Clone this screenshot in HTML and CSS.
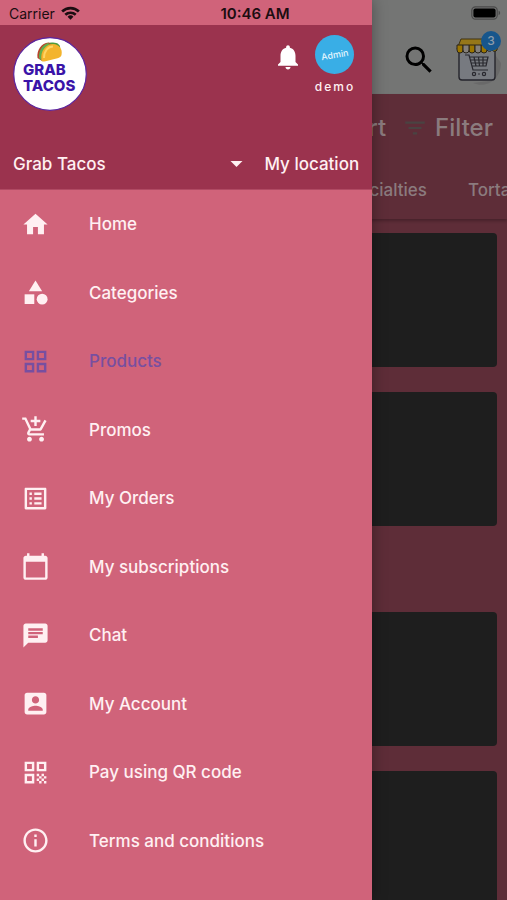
FILE: index.html
```html
<!DOCTYPE html>
<html lang="en">
<head>
<meta charset="utf-8">
<meta name="viewport" content="width=device-width, initial-scale=1">
<title>Grab Tacos</title>
<link rel="stylesheet" href="styles.css">
</head>
<body>
<div class="app">
  <div class="status">
    <span class="carrier">Carrier
      <svg class="wifi" viewBox="0 0 20 14" aria-hidden="true"><g fill="none" stroke="currentColor" stroke-width="2.8"><path d="M1.2 5.4a12.6 12.6 0 0 1 17.6 0"/><path d="M4.5 8.9a8 8 0 0 1 11 0"/></g><path fill="currentColor" d="M10 14 6.9 10.9a4.5 4.5 0 0 1 6.2 0z"/></svg>
    </span>
    <span class="time">10:46 AM</span>
    <svg class="battery" viewBox="0 0 30 14" aria-hidden="true"><rect x=".8" y=".8" width="25.4" height="12.4" rx="3.6" fill="none" stroke="#4a4a4a" stroke-width="1.2"/><rect x="2.4" y="2.4" width="22.2" height="9.2" rx="2" fill="#000"/><path d="M27.6 4.8v4.4c2-.6 2-3.8 0-4.4z" fill="#4a4a4a"/></svg>
  </div>

  <main class="page">
    <header class="appbar">
      <button class="icon-btn" aria-label="Search">
        <svg class="search" viewBox="0 0 24 24"><path fill="currentColor" d="M15.5 14h-.79l-.28-.27A6.47 6.47 0 0 0 16 9.5 6.5 6.5 0 1 0 9.5 16c1.61 0 3.09-.59 4.23-1.57l.27.28v.79l5 4.99L20.49 19l-4.99-5zm-6 0C7.01 14 5 11.99 5 9.5S7.01 5 9.5 5 14 7.01 14 9.5 11.99 14 9.5 14z"/></svg>
      </button>
      <button class="icon-btn cart" aria-label="Cart">
        <svg class="shop" viewBox="0 0 50 54">
          <path d="M20 50c14 6 28-4 28-20l-6-8v25z" fill="#696969"/>
          <path d="M6 16h36v28a3 3 0 0 1-3 3H9a3 3 0 0 1-3-3z" fill="#777a80" stroke="#25252c" stroke-width="1.4"/>
          <path d="M8 6h32l4 10H4z" fill="#967719" stroke="#3e3213" stroke-width="1"/>
          <path d="M4 12h6v5a3 3 0 0 1-6 0zM16 12h6v5a3 3 0 0 1-6 0zM28 12h6v5a3 3 0 0 1-6 0zM39 12h5v5a3 3 0 0 1-5 0z" fill="#9c7600" stroke="#2a251a"/>
          <path d="M10 12h6v5a3 3 0 0 1-6 0zM22 12h6v5a3 3 0 0 1-6 0zM34 12h5v5a3 3 0 0 1-5 0z" fill="#85817c" stroke="#2a251a"/>
          <g fill="none" stroke="#28282e" stroke-width="1.2"><path d="M12 22h4l4 15h15M16.500 24H35l-2 9H19M17.500 27h17M18.500 30h15M21 24l2 9M25.500 24l1 9M30 24v9"/><circle cx="21" cy="41" r="1.600"/><circle cx="31" cy="41" r="1.600"/></g><circle cx="26" cy="41" r=".8" fill="#28282e"/>
        </svg>
        <span class="badge">3</span>
      </button>
    </header>

    <section class="tools">
      <div class="actions">
        <button class="text-btn">Sort</button>
        <button class="text-btn">
          <svg class="filter" viewBox="0 0 24 24" aria-hidden="true"><path fill="currentColor" d="M10 18h4v-2h-4v2zM3 6v2h18V6H3zm3 7h12v-2H6v2z"/></svg>
          Filter
        </button>
      </div>
      <nav class="tabs" aria-label="Product categories">
        <a href="#specialties">Specialties</a>
        <a href="#tortas">Tortas</a>
      </nav>
    </section>

    <div class="list">
      <section class="group"><article class="card"></article><article class="card"></article></section>
      <section class="group"><article class="card"></article><article class="card"></article></section>
    </div>
  </main>

  <aside class="drawer">
    <header class="drawer-head">
      <div class="profile">
        <svg class="logo" viewBox="0 0 74 74" role="img" aria-label="Grab Tacos">
          <circle cx="37" cy="37" r="36.300" fill="#fff" stroke="#5b25a0" stroke-width="1.200"/>
          <path d="M25 20C25 11 31 5 40 5.500c5 0 8 3 7 6L32 24z" fill="#4f9b3c"/>
          <path d="M24.500 21c-1-8 4-15 11-15.500l3 2C31 10 28 17 29 24z" fill="#b8432a"/>
          <path d="M26 21c-.5-7 3-13 9-15l2 1.500c-6 3-9 9-8.500 16z" fill="#62ad4c"/>
          <path d="M28.500 23.500C27 14 33 7 40 7c6 0 10 5 8.500 11-.4 2-2 2.600-4 3.200l-12 3c-2 .5-3.700.8-4-.7z" fill="#f3b42d"/>
          <path d="M31 21c0-7 4-11.500 9-11.500" fill="none" stroke="#ffd465" stroke-width="2"/>
          <text class="logo-text" x="10" y="38">GRAB</text>
          <text class="logo-text" x="10" y="54">TACOS</text>
        </svg>
        <button class="icon-btn bell" aria-label="Notifications">
          <svg viewBox="0 0 24 24"><path fill="currentColor" d="M12 22c1.100 0 2-.9 2-2h-4c0 1.100.89 2 2 2zm6-6v-5c0-3.070-1.640-5.640-4.500-6.320V4c0-.83-.67-1.500-1.500-1.500s-1.500.67-1.500 1.500v.68C7.630 5.360 6 7.920 6 11v5l-2 2v1h16v-1l-2-2z"/></svg>
        </button>
        <a class="user" href="#profile">
          <span class="avatar"><span class="avatar-text">Admin</span></span>
          <span class="user-name">demo</span>
        </a>
      </div>
      <div class="place">
        <label class="store">
          <select class="store-select" aria-label="Store"><option>Grab Tacos</option></select>
          <svg class="caret" viewBox="0 0 12 6" aria-hidden="true"><path fill="currentColor" d="M0 0h12L6 6z"/></svg>
        </label>
        <button class="location">My location</button>
      </div>
    </header>

    <nav class="menu" aria-label="Main">
      <a href="#home"><svg viewBox="0 0 24 24"><path d="M10 20v-6h4v6h5v-8h3L12 3 2 12h3v8z"/></svg>Home</a>
      <a href="#categories"><svg viewBox="0 0 24 24"><path d="m12 2-5.500 9h11z"/><circle cx="17.500" cy="17.500" r="4.500"/><path d="M3 13.500h8v8H3z"/></svg>Categories</a>
      <a href="#products" class="current" aria-current="page"><svg viewBox="0 0 24 24"><path fill-rule="evenodd" d="M3 3v8h8V3H3zm6 6H5V5h4v4zm-6 4v8h8v-8H3zm6 6H5v-4h4v4zm4-16v8h8V3h-8zm6 6h-4V5h4v4zm-6 4v8h8v-8h-8zm6 6h-4v-4h4v4z"/></svg>Products</a>
      <a href="#promos"><svg viewBox="0 0 24 24"><path d="M11 9h2V6h3V4h-3V1h-2v3H8v2h3v3zm-4 9c-1.100 0-1.990.9-1.990 2S5.900 22 7 22s2-.9 2-2-.9-2-2-2zm10 0c-1.100 0-1.990.9-1.990 2s.89 2 1.990 2 2-.9 2-2-.9-2-2-2zm-8.900-5h7.450c.75 0 1.410-.41 1.750-1.030l3.860-7.010L19.420 4l-3.870 7H8.530L4.270 2H1v2h2l3.600 7.590-1.350 2.440C4.520 15.370 5.480 17 7 17h12v-2H7l1.100-2z"/></svg>Promos</a>
      <a href="#orders"><svg viewBox="0 0 24 24"><path d="M19 5v14H5V5h14m1.100-2H3.900c-.5 0-.9.4-.9.9v16.200c0 .4.400.9.900.9h16.200c.4 0 .9-.5.9-.9V3.900c0-.5-.5-.9-.9-.9zM11 7h6v2h-6V7zm0 4h6v2h-6v-2zm0 4h6v2h-6zM7 7h2v2H7zm0 4h2v2H7zm0 4h2v2H7z"/></svg>My Orders</a>
      <a href="#subscriptions"><svg viewBox="0 0 24 24"><path d="M20 3h-1V1h-2v2H7V1H5v2H4c-1.100 0-2 .9-2 2v16c0 1.100.9 2 2 2h16c1.100 0 2-.9 2-2V5c0-1.100-.9-2-2-2zm0 18H4V8h16v13z"/></svg>My subscriptions</a>
      <a href="#chat"><svg viewBox="0 0 24 24"><path d="M20 2H4c-1.100 0-1.990.9-1.990 2L2 22l4-4h14c1.100 0 2-.9 2-2V4c0-1.100-.9-2-2-2zM6 9h12v2H6V9zm8 5H6v-2h8v2zm4-6H6V6h12v2z"/></svg>Chat</a>
      <a href="#account"><svg viewBox="0 0 24 24"><path d="M3 5v14c0 1.100.89 2 2 2h14c1.100 0 2-.9 2-2V5c0-1.100-.9-2-2-2H5c-1.110 0-2 .9-2 2zm12 4c0 1.660-1.340 3-3 3s-3-1.340-3-3 1.340-3 3-3 3 1.340 3 3zm-9 8c0-2 4-3.100 6-3.100s6 1.100 6 3.100v1H6v-1z"/></svg>My Account</a>
      <a href="#pay"><svg viewBox="0 0 24 24"><path fill-rule="evenodd" d="M3 11h8V3H3v8zm2-6h4v4H5V5zM3 21h8v-8H3v8zm2-6h4v4H5v-4zm8-12v8h8V3h-8zm6 6h-4V5h4v4zM19 19h2v2h-2zM13 13h2v2h-2zM15 15h2v2h-2zM13 17h2v2h-2zM15 19h2v2h-2zM17 17h2v2h-2zM17 13h2v2h-2zM19 15h2v2h-2z"/></svg>Pay using QR code</a>
      <a href="#terms"><svg viewBox="0 0 24 24"><path d="M11 7h2v2h-2zm0 4h2v6h-2zm1-9C6.480 2 2 6.480 2 12s4.480 10 10 10 10-4.480 10-10S17.520 2 12 2zm0 18c-4.410 0-8-3.590-8-8s3.590-8 8-8 8 3.590 8 8-3.590 8-8 8z"/></svg>Terms and conditions</a>
    </nav>
  </aside>
</div>
</body>
</html>
```
FILE: styles.css
```css
* {
  box-sizing: border-box;
}

body {
  margin: 0;
  font-family: Inter, Roboto, sans-serif;
  font-size: 17px;
  font-weight: 500;
}

button,
select {
  padding: 0;
  border: 0;
  background: none;
  color: inherit;
  font: inherit;
}

a {
  color: inherit;
  text-decoration: none;
}

svg {
  display: block;
  flex: none;
}

.app {
  position: relative;
  height: 100vh;
  overflow: hidden;
  background: #5e2d38;
}

/* Status bar, over both the page and the drawer */
.status {
  position: absolute;
  z-index: 3;
  top: 0;
  left: 0;
  right: 0;
  display: grid;
  grid-template-columns: 1fr auto 1fr;
  align-items: center;
  height: 26px;
  padding: 0 6px 0 9px;
  color: #1c0d11;
  font-size: 14px;
}

.carrier {
  display: flex;
  align-items: center;
  gap: 6px;
  font-weight: 400;
}

.wifi {
  width: 19px;
  height: 14px;
}

.time {
  font-size: 15px;
  font-weight: 600;
}

.battery {
  justify-self: end;
  width: 30px;
  height: 14px;
}

/* Page under the drawer */
.appbar {
  display: flex;
  justify-content: flex-end;
  align-items: center;
  gap: 16px;
  height: 94px;
  padding: 26px 4px 0 0;
  background: #747574;
}

.icon-btn {
  position: relative;
  flex: none;
}

.search {
  width: 36px;
  height: 36px;
  color: #000;
}

.shop {
  width: 50px;
  height: 54px;
}

.badge {
  position: absolute;
  top: -2px;
  right: 2px;
  width: 20px;
  height: 20px;
  border-radius: 50%;
  background: #17568c;
  color: #8d9cab;
  font-size: 12px;
  line-height: 20px;
  text-align: center;
}

.tools {
  padding: 16px 0 18px;
  box-shadow: 0 2px 3px rgba(0, 0, 0, 0.25);
  color: #8b7b7e;
}

.actions {
  display: flex;
  justify-content: flex-end;
  gap: 16px;
  padding-right: 14px;
  font-size: 24px;
  line-height: 36px;
}

.text-btn {
  display: flex;
  align-items: center;
  gap: 7px;
}

.filter {
  width: 26px;
  height: 26px;
  color: #4a4342;
}

.tabs {
  display: flex;
  gap: 41px;
  margin-top: 33px;
  overflow: hidden;
  line-height: 22px;
  white-space: nowrap;
}

.tabs a:first-child {
  flex: 0 0 84.2%;
  text-align: right;
}

.list {
  display: grid;
  gap: 86px;
  padding: 14px 10px 14px;
}

.group {
  display: grid;
  gap: 25px;
}

.card {
  height: 134px;
  border-radius: 4px;
  background: #1e1e1e;
}

/* Drawer */
.drawer {
  position: absolute;
  z-index: 2;
  top: 0;
  bottom: 0;
  left: 0;
  display: flex;
  flex-direction: column;
  width: 73.4%;
  padding-top: 25px;
  background: #d0637a;
  box-shadow: 0 0 14px rgba(0, 0, 0, 0.35);
  color: #fff0f2;
}

.drawer-head {
  padding: 10px 13px 12px;
  border-bottom: 1px solid #b04a63;
  background: #9b334e;
}

.profile {
  display: flex;
  align-items: flex-start;
  padding-right: 4px;
}

.logo {
  width: 74px;
  height: 74px;
  margin: 2px auto 0 0;
}

.logo-text {
  fill: #3a14a8;
  font-size: 15px;
  font-weight: 800;
}

.bell {
  margin: 7px 12px 0 0;
  color: #fff;
}

.bell svg {
  width: 30px;
  height: 30px;
}

.user {
  display: grid;
  justify-items: center;
  gap: 5px;
}

.avatar {
  display: grid;
  place-items: center;
  width: 39px;
  height: 39px;
  border-radius: 50%;
  background: #39aee6;
}

.avatar-text {
  color: #e4f6ff;
  font-size: 9px;
  transform: rotate(-10deg);
}

.user-name {
  font-size: 12px;
  line-height: 16px;
  letter-spacing: 2px;
}

.place {
  display: flex;
  align-items: center;
  gap: 21px;
  margin-top: 40px;
  line-height: 26px;
}

.store {
  display: grid;
  flex: 1;
  align-items: center;
}

.store-select {
  grid-area: 1 / 1;
  width: 100%;
  appearance: none;
}

.caret {
  grid-area: 1 / 1;
  justify-self: end;
  width: 13px;
  height: 6px;
  pointer-events: none;
}

.menu {
  display: grid;
  flex: 1;
  grid-auto-rows: 1fr;
  padding-bottom: 25px;
}

.menu a {
  display: flex;
  align-items: center;
  gap: 39px;
  padding-left: 21px;
}

.menu svg {
  width: 29px;
  height: 29px;
  fill: currentColor;
}

.menu .current {
  color: #774fa0;
}
```
